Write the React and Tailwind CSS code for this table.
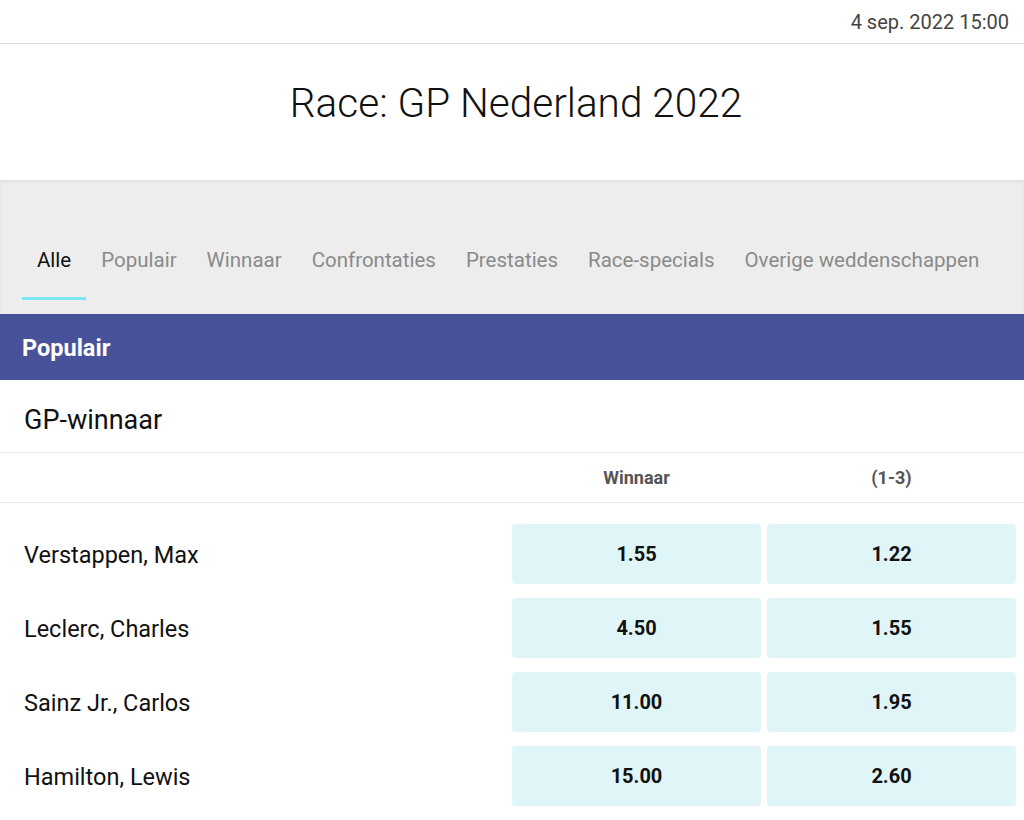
import React from 'react';

const tabs = ['Alle', 'Populair', 'Winnaar', 'Confrontaties', 'Prestaties', 'Race-specials', 'Overige weddenschappen'];

const rows = [
  { name: 'Verstappen, Max', win: '1.55', top: '1.22' },
  { name: 'Leclerc, Charles', win: '4.50', top: '1.55' },
  { name: 'Sainz Jr., Carlos', win: '11.00', top: '1.95' },
  { name: 'Hamilton, Lewis', win: '15.00', top: '2.60' },
];

const OddsCell = ({ value }) => (
  <div className="flex-1 h-[60px] rounded bg-[#e0f5f8] flex items-center justify-center text-[20px] font-bold text-[#111]">
    {value}
  </div>
);

const App = () => {
  return (
    <div className="w-[1024px] h-[820px] overflow-hidden bg-white font-['Roboto',sans-serif]">
      {/* date bar */}
      <div className="h-[44px] border-b border-[#dcdcdc] flex items-center justify-end pr-[15px]">
        <span className="text-[20px] text-[#444]">4 sep. 2022 15:00</span>
      </div>

      {/* title */}
      <div className="h-[136px] flex items-center justify-center pb-[18px] pl-[8px]">
        <h1 className="text-[40.5px] font-light text-[#111]">Race: GP Nederland 2022</h1>
      </div>

      {/* tabs */}
      <div className="h-[134px] bg-[#ededed] shadow-[inset_0_2px_3px_rgba(0,0,0,0.05)] flex items-end px-[22px]">
        <nav className="flex">
          {tabs.map((t, i) => (
            <div key={t} className="flex flex-col shrink-0">
              <span
                className={`px-[15px] pb-[22px] text-[20.5px] leading-[30px] whitespace-nowrap ${i === 0 ? 'text-[#111]' : 'text-[#8a8a8a]'}`}
              >
                {t}
              </span>
              <div className={`h-[3px] mb-[14px] ${i === 0 ? 'bg-[#7de6f2]' : 'bg-transparent'}`} />
            </div>
          ))}
        </nav>
      </div>

      {/* section header */}
      <div className="h-[66px] bg-[#48529b] flex items-center px-[22px] pt-[3px]">
        <span className="text-[23.5px] font-bold text-white">Populair</span>
      </div>

      {/* market */}
      <div className="h-[73px] border-b border-[#ececec] flex items-center px-[24px] pt-[8px]">
        <span className="text-[27px] text-[#111]">GP-winnaar</span>
      </div>

      <div className="h-[50px] border-b border-[#ececec] flex items-center">
        <div className="w-[512px]" />
        <div className="flex-1 flex gap-[6px] pr-[8px] text-[18px] font-bold text-[#555]">
          <div className="flex-1 text-center">Winnaar</div>
          <div className="flex-1 text-center">(1-3)</div>
        </div>
      </div>

      <div className="flex flex-col gap-[14px] pt-[21px]">
        {rows.map((r) => (
          <div key={r.name} className="flex items-center">
            <div className="w-[512px] pl-[24px] pt-[3px] text-[23.5px] text-[#111]">{r.name}</div>
            <div className="flex-1 flex gap-[6px] pr-[8px]">
              <OddsCell value={r.win} />
              <OddsCell value={r.top} />
            </div>
          </div>
        ))}
      </div>
    </div>
  );
};

export default App;
